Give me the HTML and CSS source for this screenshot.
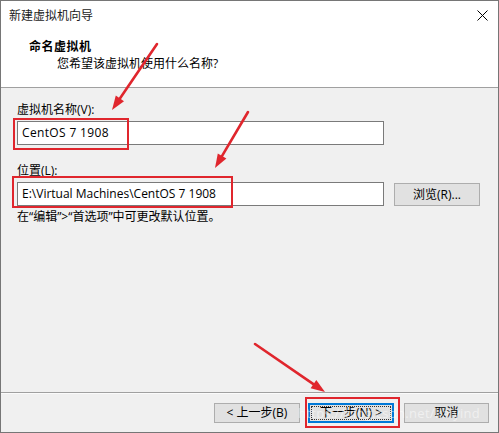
FILE: index.html
```html
<!DOCTYPE html>
<html lang="zh-CN">
<head>
<meta charset="utf-8">
<title>新建虚拟机向导</title>
<link rel="stylesheet" href="styles.css">
</head>
<body>
<div class="window">
  <div class="titlebar">
    <span class="title">新建虚拟机向导</span>
    <svg class="close" width="11" height="11" viewBox="0 0 11 11"><path d="M0.5 0.5 L10.5 10.5 M10.5 0.5 L0.5 10.5" stroke="#000" stroke-width="1" fill="none"/></svg>
  </div>
  <div class="header">
    <div class="h-title">命名虚拟机</div>
    <div class="h-sub">您希望该虚拟机使用什么名称?</div>
  </div>
  <div class="body">
    <div class="label">虚拟机名称(V):</div>
    <div class="input name">CentOS 7 1908</div>
    <div class="label second">位置(L):</div>
    <div class="row">
      <div class="input path">E:\Virtual Machines\CentOS 7 1908</div>
      <div class="btn browse">浏览(R)...</div>
    </div>
    <div class="hint">在“编辑”&gt;“首选项”中可更改默认位置。</div>
  </div>
  <div class="footer">
    <div class="btn">&lt; 上一步(B)</div>
    <div class="btn primary">下一步(N) &gt;</div>
    <div class="btn cancel">取消</div>
  </div>
  <div class="watermark">https://blog.csdn.net/kaiyind</div>
  <svg class="marks" width="499" height="433" viewBox="0 0 499 433">
    <g fill="none" stroke="#e0262d" stroke-width="2">
      <rect x="14" y="119" width="114" height="30"/>
      <rect x="13" y="177" width="219" height="30"/>
      <rect x="306" y="398" width="93" height="29"/>
    </g>
    <g stroke="#e0262d" stroke-width="2.6" stroke-linecap="round">
      <line x1="157" y1="44" x2="119.9" y2="98.4"/>
      <line x1="248" y1="112" x2="222.1" y2="155.9"/>
      <line x1="255" y1="344" x2="313.4" y2="384.1"/>
    </g>
    <g fill="#e0262d">
      <polygon points="112,110 124,101.2 115.8,95.6"/>
      <polygon points="215,168 226.4,158.4 217.8,153.4"/>
      <polygon points="325,392 310.6,388.2 316.3,380"/>
    </g>
  </svg>
</div>
</body>
</html>
```
FILE: styles.css
```css
html, body {
  margin: 0;
  padding: 0;
  background: #ffffff;
}
.window {
  position: relative;
  width: 499px;
  height: 433px;
  box-sizing: border-box;
  border: 1px solid #767676;
  display: flex;
  flex-direction: column;
  font-family: "Open Sans", "Noto Sans CJK SC", sans-serif;
  font-size: 12px;
  color: #000;
  background: #f0f0f0;
  overflow: hidden;
}
.titlebar {
  height: 29px;
  flex: none;
  background: #fff;
  display: flex;
  align-items: center;
  padding: 0 10px 0 8px;
}
.title {
  line-height: 29px;
  color: #1a1a1a;
}
.close {
  margin-left: auto;
  display: block;
}
.header {
  height: 57px;
  flex: none;
  background: #fff;
  border-bottom: 1px solid #a0a0a0;
  box-sizing: content-box;
  padding: 0 0 0 28px;
}
.h-title {
  font-weight: bold;
  line-height: 17px;
  margin-top: 8px;
  letter-spacing: 0.5px;
}
.h-sub {
  line-height: 17px;
  margin-left: 28px;
}
.body {
  flex: 1;
  padding: 14px 0 0 16px;
  display: flex;
  flex-direction: column;
}
.label {
  line-height: 16px;
}
.label.second {
  margin-top: 18px;
}
.input {
  box-sizing: border-box;
  height: 24px;
  width: 367px;
  border: 1px solid #7a7a7a;
  background: #fff;
  padding-left: 4px;
  line-height: 22px;
  margin-top: 3px;
  white-space: nowrap;
}
.input.name {
  letter-spacing: 0.35px;
}
.row {
  display: flex;
  align-items: flex-start;
  margin-top: 3px;
}
.row .input {
  margin-top: 0;
}
.btn {
  box-sizing: border-box;
  width: 86px;
  height: 20px;
  border: 1px solid #adadad;
  background: #e1e1e1;
  text-align: center;
  line-height: 18px;
  white-space: nowrap;
  position: relative;
}
.browse {
  height: 23px;
  line-height: 21px;
  margin: 1px 0 0 10px;
}
.hint {
  line-height: 16px;
  margin-top: 3px;
}
.footer {
  height: 40px;
  flex: none;
  box-sizing: border-box;
  border-top: 1px solid #a0a0a0;
  box-shadow: inset 0 1px 0 #fbfbfb;
  display: flex;
  justify-content: flex-end;
  align-items: flex-start;
  padding: 10px 9px 0 0;
}
.footer .btn + .btn {
  margin-left: 8px;
}
.footer .btn.cancel {
  margin-left: 10px;
  width: 85px;
}
.primary {
  border: 1px solid #0078d7;
  box-shadow: inset 0 0 0 1px #0078d7;
}
.primary::after {
  content: "";
  position: absolute;
  left: 2px;
  top: 2px;
  right: 2px;
  bottom: 2px;
  border: 1px dotted #333;
}
.watermark {
  position: absolute;
  left: 297px;
  top: 403px;
  font-family: "Open Sans", sans-serif;
  font-size: 13px;
  letter-spacing: 0.3px;
  color: rgba(255, 255, 255, 0.5);
  white-space: nowrap;
  pointer-events: none;
}
.marks {
  position: absolute;
  left: -1px;
  top: -1px;
  pointer-events: none;
}
```
